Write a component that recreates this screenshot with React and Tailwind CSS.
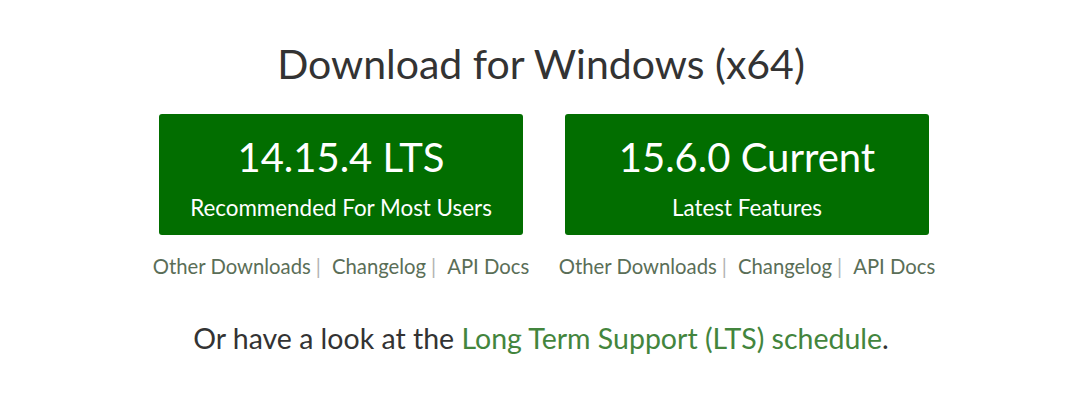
import React from 'react';

const releases = [
  { version: '14.15.4 LTS', label: 'Recommended For Most Users' },
  { version: '15.6.0 Current', label: 'Latest Features' },
];

function LinkRow() {
  return (
    <div className="mt-[21px] flex items-center whitespace-nowrap text-[20.3px] leading-none text-[#5a6e57]">
      <span>Other Downloads</span>
      <span className="ml-[5px] mr-[11px] text-[#b3b3b3]">|</span>
      <span>Changelog</span>
      <span className="ml-[5px] mr-[11px] text-[#b3b3b3]">|</span>
      <span>API Docs</span>
    </div>
  );
}

export default function App() {
  return (
    <div className="w-[1082px] h-[394px] bg-white flex flex-col items-center font-['Lato',sans-serif]">
      <h1 className="mt-[36px] text-[41px] leading-[56px] text-[#333]">Download for Windows (x64)</h1>
      <div className="mt-[22px] flex gap-[42px] pl-[6px]">
        {releases.map((r) => (
          <div key={r.version} className="w-[364px] flex flex-col items-center">
            <div className="w-full h-[121px] rounded-[3px] bg-[#026e00] text-white flex flex-col items-center pt-[18px]">
              <div className="text-[40px] leading-[50px]">{r.version}</div>
              <div className="mt-[12px] text-[22.4px] leading-[28px]">{r.label}</div>
            </div>
            <LinkRow />
          </div>
        ))}
      </div>
      <p className="mt-[45px] text-[28.5px] leading-[34px] text-[#333]">
        Or have a look at the <span className="text-[#43853d]">Long Term Support (LTS) schedule</span>.
      </p>
    </div>
  );
}
